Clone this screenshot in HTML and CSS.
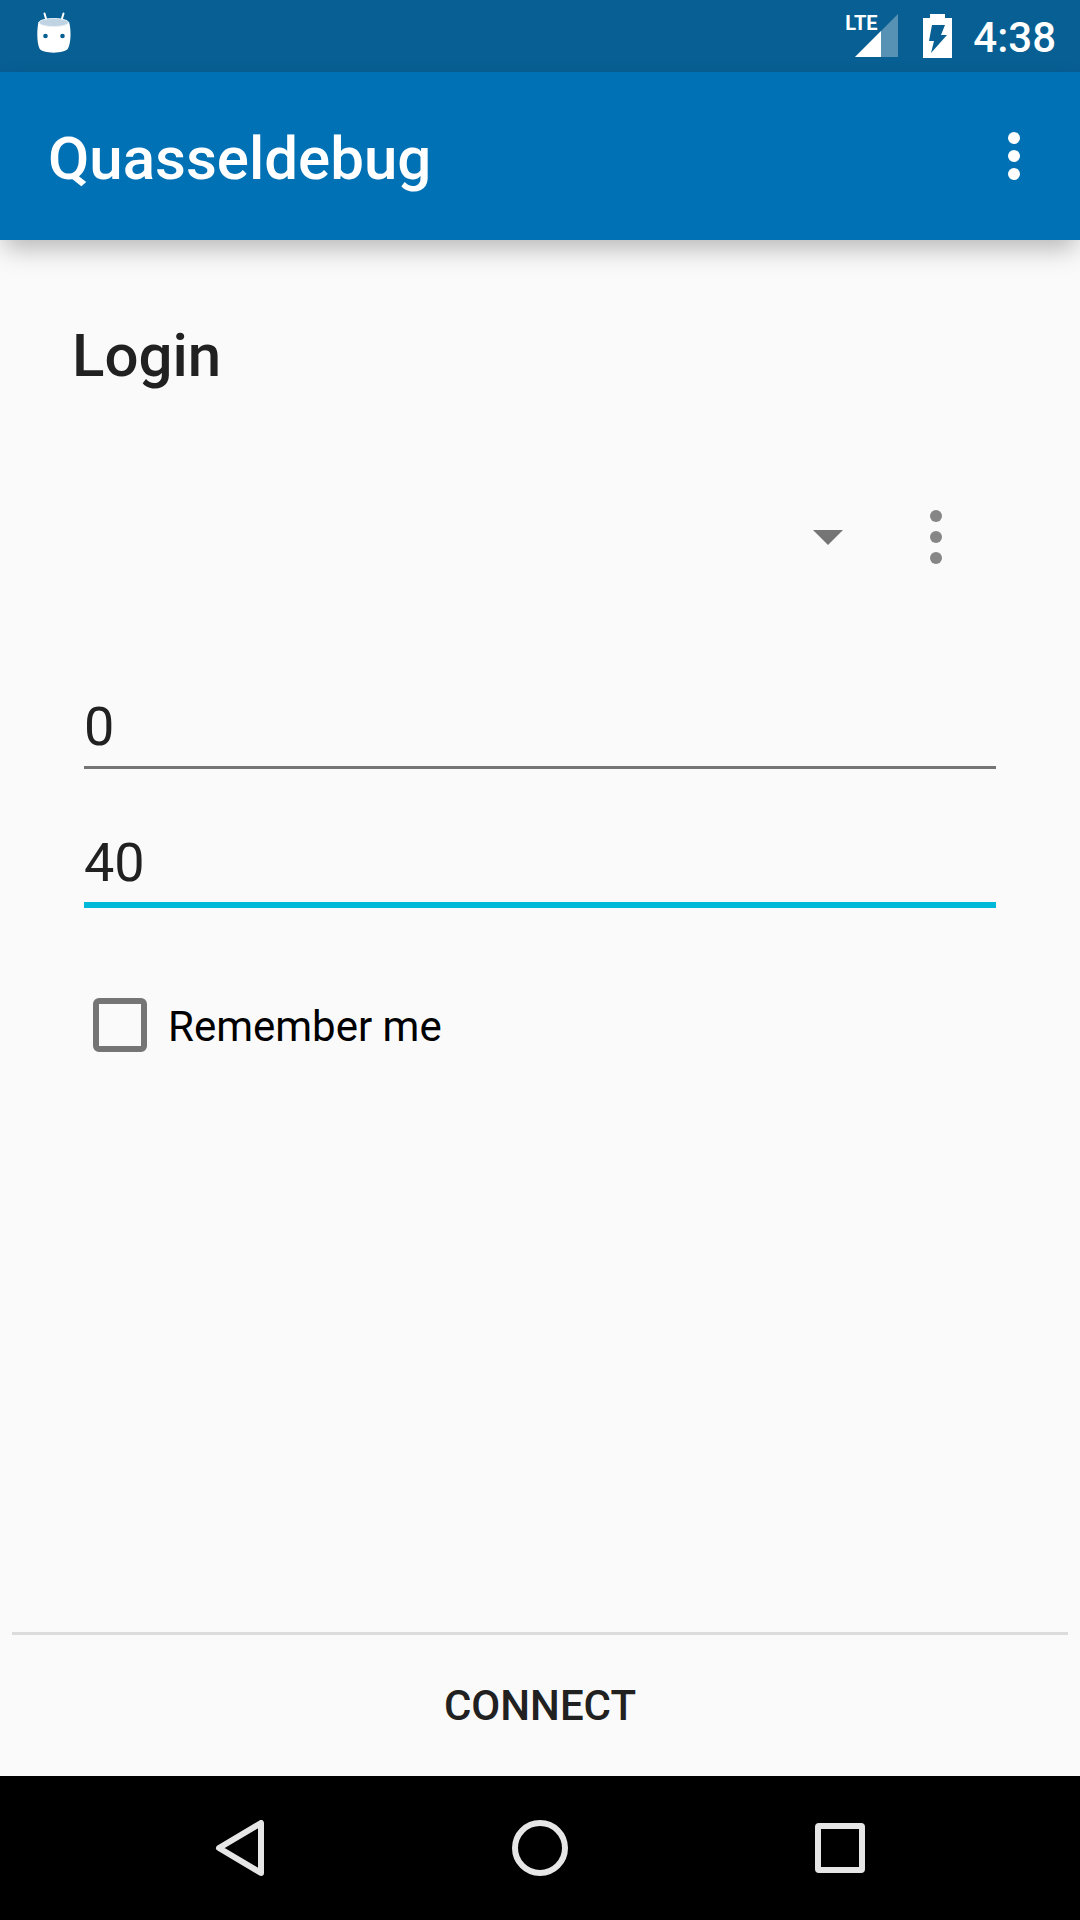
FILE: index.html
```html
<!DOCTYPE html>
<html lang="en">
<head>
<meta charset="utf-8">
<meta name="viewport" content="width=device-width, initial-scale=1">
<title>Quasseldebug</title>
<link rel="stylesheet" href="styles.css">
</head>
<body>
<div class="status-bar">
  <svg class="droid" width="36" height="42" viewBox="0 0 36 42" aria-hidden="true">
    <path d="M8.500 1.500L11 10M27.500 1.500L25 10" stroke="#fff" stroke-width="2" stroke-linecap="round"/>
    <path d="M2.500 10C1 16 .5 30 3.500 36.500C6 42 29 42 32 36.500C35.500 30 35 16 33 10Z" fill="#fff"/>
    <ellipse cx="17.800" cy="10.500" rx="14.500" ry="4" fill="#bfd3e2"/>
    <ellipse cx="17.800" cy="10.500" rx="14.800" ry="4" fill="none" stroke="#e8f0f5" stroke-width="1"/>
    <circle cx="9.500" cy="24" r="2.300" fill="#085f93"/>
    <circle cx="26.500" cy="24" r="2.300" fill="#085f93"/>
  </svg>
  <div class="status-icons">
    <div class="signal">
      <svg width="54" height="44" viewBox="0 0 54 44" aria-hidden="true">
        <path d="M53 0V43H10Z" fill="#fff" fill-opacity=".32"/>
        <path d="M36 17V43H10Z" fill="#fff"/>
      </svg>
      <span class="network">LTE</span>
    </div>
    <svg width="29" height="44" viewBox="0 0 29 44" aria-hidden="true">
      <path d="M7 0H22V4H29V44H0V4H7Z" fill="#fff"/>
      <path d="M9 11H22L18 21H24L8 39L11 27H6Z" fill="#085f93"/>
    </svg>
    <span class="clock">4:38</span>
  </div>
</div>

<header class="app-bar">
  <h1 class="app-title">Quasseldebug</h1>
  <button class="icon-button" type="button" aria-label="More options">
    <svg width="12" height="48" viewBox="0 0 12 48" fill="#fff"><circle cx="6" cy="6" r="6"/><circle cx="6" cy="24" r="6"/><circle cx="6" cy="42" r="6"/></svg>
  </button>
</header>

<form class="login">
  <main class="content">
    <h2 class="heading">Login</h2>
    <div class="account-row">
      <div class="account-picker">
        <select class="account-select" aria-label="Account"><option></option></select>
        <svg class="arrow" width="30" height="16" viewBox="0 0 30 16" aria-hidden="true"><path d="M0 1H30L15 16Z" fill="#757575"/></svg>
      </div>
      <button class="icon-button" type="button" aria-label="Account options">
        <svg width="12" height="54" viewBox="0 0 12 54" fill="#868686"><circle cx="6" cy="6" r="6"/><circle cx="6" cy="27" r="6"/><circle cx="6" cy="48" r="6"/></svg>
      </button>
    </div>
    <div class="fields">
      <input class="field" type="text" value="0" aria-label="Username">
      <input class="field field-active" type="text" value="40" aria-label="Password">
    </div>
    <label class="remember"><input class="checkbox" type="checkbox"><span class="remember-text">Remember me</span></label>
  </main>
  <footer class="actions">
    <button class="connect" type="submit">CONNECT</button>
  </footer>
</form>

<nav class="nav-bar">
  <button class="nav-button" type="button" aria-label="Back">
    <svg width="56" height="56" viewBox="0 0 56 56"><path d="M7 28L49 3V53Z"/></svg>
  </button>
  <button class="nav-button" type="button" aria-label="Home">
    <svg width="56" height="56" viewBox="0 0 56 56"><circle cx="28" cy="28" r="25"/></svg>
  </button>
  <button class="nav-button" type="button" aria-label="Recent apps">
    <svg width="56" height="56" viewBox="0 0 56 56"><rect x="6" y="6" width="44" height="44" rx="1"/></svg>
  </button>
</nav>
</body>
</html>
```
FILE: styles.css
```css
* {
  box-sizing: border-box;
}

body {
  margin: 0;
  min-height: 100vh;
  display: flex;
  flex-direction: column;
  background: #fafafa;
  color: #212121;
  font-family: Roboto, "Liberation Sans", sans-serif;
}

button,
input,
select {
  margin: 0;
  padding: 0;
  border: 0;
  border-radius: 0;
  background: none;
  color: inherit;
  font: inherit;
  outline: 0;
}

svg {
  display: block;
}

.status-bar {
  display: flex;
  justify-content: space-between;
  align-items: flex-start;
  height: 72px;
  padding: 12px 24px 0 36px;
  background: #085f93;
  color: #fff;
}

.status-icons {
  display: flex;
  align-items: flex-start;
  padding-top: 2px;
}

.signal {
  position: relative;
  margin-right: 24px;
}

.network {
  position: absolute;
  top: 1px;
  left: 0;
  font-size: 20px;
  font-weight: 700;
  line-height: 16px;
}

.clock {
  margin-left: 21px;
  font-size: 42px;
  font-weight: 500;
  line-height: 48px;
}

.app-bar {
  display: flex;
  justify-content: space-between;
  align-items: center;
  height: 168px;
  padding: 0 18px 0 48px;
  background: #0071b4;
  color: #fff;
  box-shadow: 0 12px 24px -4px rgba(0, 0, 0, 0.28);
}

.app-title {
  margin: 0;
  padding-top: 6px;
  font-size: 60px;
  font-weight: 500;
  line-height: 72px;
}

.icon-button {
  display: flex;
  justify-content: center;
  align-items: center;
  width: 96px;
  height: 96px;
}

.login {
  flex: 1;
  display: flex;
  flex-direction: column;
}

.content {
  flex: 1;
  padding: 80px 72px 0;
}

.heading {
  margin: 0;
  font-size: 60px;
  font-weight: 500;
  line-height: 72px;
}

.account-row {
  display: flex;
  align-items: center;
  margin-top: 97px;
  padding-right: 24px;
}

.account-picker {
  flex: 1;
  display: grid;
  align-items: center;
}

.account-select {
  grid-area: 1 / 1;
  width: 100%;
  height: 96px;
  appearance: none;
}

.arrow {
  grid-area: 1 / 1;
  justify-self: end;
  margin-right: 45px;
  pointer-events: none;
}

.fields {
  display: grid;
  gap: 61px;
  margin-top: 109px;
  padding: 0 12px;
}

.field {
  width: 100%;
  height: 75px;
  padding-bottom: 8px;
  border-bottom: 3px solid #757575;
  font-size: 54px;
  line-height: 64px;
}

.field-active {
  height: 78px;
  border-bottom: 6px solid #00b8d8;
}

.remember {
  display: inline-flex;
  align-items: center;
  gap: 21px;
  margin: 90px 21px 0;
  color: #000;
  font-size: 42px;
  line-height: 50px;
}

.remember-text {
  padding-top: 4px;
}

.checkbox {
  width: 54px;
  height: 54px;
  border: 6px solid #757575;
  border-radius: 6px;
  appearance: none;
}

.checkbox:checked {
  background: #757575;
}

.actions {
  margin: 0 12px;
  border-top: 3px solid #dcdcdc;
}

.connect {
  width: 100%;
  height: 141px;
  font-size: 42px;
  font-weight: 500;
}

.nav-bar {
  display: flex;
  justify-content: center;
  height: 144px;
  background: #000;
}

.nav-button {
  display: flex;
  justify-content: center;
  align-items: center;
  width: 300px;
}

.nav-button svg {
  fill: none;
  stroke: #e6e6e6;
  stroke-width: 6px;
  stroke-linejoin: round;
}
```
